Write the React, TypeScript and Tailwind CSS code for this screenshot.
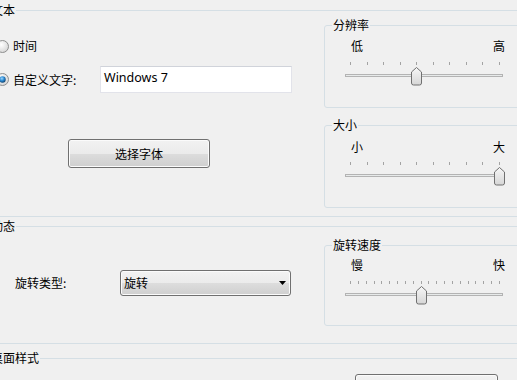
import React from "react";

const cjk = "font-['Noto_Sans_CJK_SC','Noto_Sans',sans-serif]";

function Radio({ checked }: { checked?: boolean }) {
  return (
    <svg width="13" height="13" viewBox="0 0 13 13" className="shrink-0">
      <defs>
        <radialGradient id="rb" cx="0.4" cy="0.35" r="0.7">
          <stop offset="0" stopColor="#ffffff" />
          <stop offset="1" stopColor="#d4d4d4" />
        </radialGradient>
        <radialGradient id="rd" cx="0.4" cy="0.35" r="0.7">
          <stop offset="0" stopColor="#9fd6fb" />
          <stop offset="0.5" stopColor="#2a8ad4" />
          <stop offset="1" stopColor="#0d3b63" />
        </radialGradient>
      </defs>
      <circle cx="6.5" cy="6.5" r="6" fill="url(#rb)" stroke="#8e8f8f" />
      {checked && <circle cx="6.5" cy="6.5" r="3.2" fill="url(#rd)" />}
    </svg>
  );
}

function Slider({ ticks, index }: { ticks: number; index: number }) {
  const x0 = 5;
  const x1 = 154;
  const step = (x1 - x0) / (ticks - 1);
  const cx = Math.round(x0 + index * step) + 0.5;
  return (
    <svg width="162" height="24" viewBox="0 0 162 24" className="block">
      <defs>
        <linearGradient id="th" x1="0" y1="0" x2="0" y2="1">
          <stop offset="0" stopColor="#f7f7f7" />
          <stop offset="1" stopColor="#d6d6d6" />
        </linearGradient>
      </defs>
      {Array.from({ length: ticks }).map((_, i) => {
        const x = Math.round(x0 + i * step) + 0.5;
        return <line key={i} x1={x} x2={x} y1={0} y2={3} stroke="#a3a3a3" />;
      })}
      <rect x="0.5" y="12.5" width="157" height="2" fill="#e7eaea" stroke="#b3b3b3" />
      <path
        d={`M${cx},5.5 L${cx + 5},10 L${cx + 5},21 Q${cx + 5},23 ${cx + 3},23 L${cx - 3},23 Q${cx - 5},23 ${cx - 5},21 L${cx - 5},10 Z`}
        fill="url(#th)"
        stroke="#707070"
      />
    </svg>
  );
}

function SliderBox({
  title,
  low,
  high,
  ticks,
  index,
  boxH,
  labelTop,
  ticksTop,
}: {
  title: string;
  low: string;
  high: string;
  ticks: number;
  index: number;
  boxH: string;
  labelTop: string;
  ticksTop: string;
}) {
  return (
    <fieldset className={`border border-[#d5dfe5] rounded-[3px] ${boxH}`}>
      <legend className="ml-[7px] px-[1px] text-[12px] leading-[14px]">{title}</legend>
      <div className={`ml-[26px] w-[154px] flex justify-between text-[12px] leading-[14px] ${labelTop}`}>
        <span>{low}</span>
        <span>{high}</span>
      </div>
      <div className={`ml-[20px] ${ticksTop}`}>
        <Slider ticks={ticks} index={index} />
      </div>
    </fieldset>
  );
}

const btn =
  "border border-[#707070] rounded-[3px] bg-[linear-gradient(#f2f2f2_0%,#ebebeb_50%,#dddddd_50%,#cfcfcf_100%)] shadow-[inset_0_0_0_1px_#fbfbfb]";

export default function App() {
  return (
    <div className={`w-[517px] h-[380px] overflow-hidden bg-[#f0f0f0] text-black ${cjk}`}>
      <div className="ml-[-18px] w-[560px] flex flex-col">
        {/* 文本 */}
        <fieldset className="mt-[3px] h-[214px] border border-[#d5dfe5] rounded-[3px]">
          <legend className="ml-[7px] px-[1px] text-[12px] leading-[14px]">文本</legend>
          <div className="flex">
            <div className="w-[341px] flex flex-col text-[12px] leading-[14px]">
              <div className="mt-[22px] ml-[13px] flex items-center gap-[4px]">
                <Radio />
                <span>时间</span>
              </div>
              <div className="mt-[13px] flex items-center h-[27px]">
                <div className="ml-[13px] w-[104px] flex items-center gap-[4px]">
                  <Radio checked />
                  <span>自定义文字:</span>
                </div>
                <div className="w-[192px] h-[27px] bg-white border border-[#e2e3ea] border-t-[#d0d3da] pl-[3px] pt-[3px] font-['Noto_Sans',sans-serif] text-[12.5px] leading-[16px]">
                  Windows 7
                </div>
              </div>
              <button
                className={`mt-[46px] ml-[85px] w-[142px] h-[29px] text-[12px] leading-[14px] ${btn}`}
              >
                选择字体
              </button>
            </div>
            <div className="flex-1 flex flex-col gap-[10px] pr-[10px]">
              <div className="mt-[1px]">
                <SliderBox
                  title="分辨率"
                  low="低"
                  high="高"
                  ticks={10}
                  index={4}
                  boxH="h-[90px]"
                  labelTop="mt-[7px]"
                  ticksTop="mt-[9px]"
                />
              </div>
              <SliderBox
                title="大小"
                low="小"
                high="大"
                ticks={10}
                index={9}
                boxH="h-[90px]"
                labelTop="mt-[8px]"
                ticksTop="mt-[8px]"
              />
            </div>
          </div>
        </fieldset>

        {/* 动态 */}
        <fieldset className="mt-[2px] h-[125px] border border-[#d5dfe5] rounded-[3px]">
          <legend className="ml-[7px] px-[1px] text-[12px] leading-[14px]">动态</legend>
          <div className="flex">
            <div className="w-[341px] flex text-[12px] leading-[14px]">
              <div className="mt-[37px] flex items-center h-[26px]">
                <span className="ml-[32px] w-[105px]">旋转类型:</span>
                <div className={`w-[171px] h-[26px] flex items-center justify-between pl-[3px] pr-[4px] ${btn}`}>
                  <span>旋转</span>
                  <svg width="7" height="4" viewBox="0 0 7 4">
                    <path d="M0,0 L7,0 L3.5,4 Z" fill="#000" />
                  </svg>
                </div>
              </div>
            </div>
            <div className="flex-1 pr-[10px] mt-[5px]">
              <SliderBox
                title="旋转速度"
                low="慢"
                high="快"
                ticks={20}
                index={9}
                boxH="h-[88px]"
                labelTop="mt-[6px]"
                ticksTop="mt-[9px]"
              />
            </div>
          </div>
        </fieldset>

        {/* 桌面样式 */}
        <fieldset className="mt-[7px] h-[80px] border border-[#d5dfe5] rounded-[3px]">
          <legend className="ml-[7px] px-[1px] text-[12px] leading-[14px]">桌面样式</legend>
          <div className="flex">
            <div className="w-[372px] shrink-0" />
            <button className={`mt-[9px] w-[143px] h-[28px] shrink-0 text-[12px] leading-[14px] ${btn}`} />
          </div>
        </fieldset>
      </div>
    </div>
  );
}
